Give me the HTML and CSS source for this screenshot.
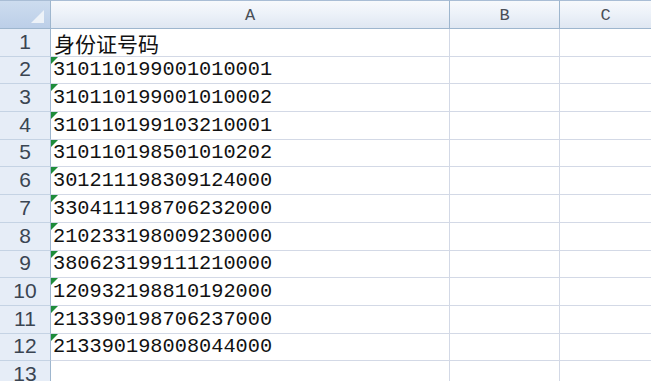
FILE: index.html
```html
<!DOCTYPE html>
<html>
<head>
<meta charset="utf-8">
<link rel="stylesheet" href="styles.css">
</head>
<body>
<div class="sheet">
  <div class="corner"><span class="corner-tri"></span></div>
  <div class="colhead">A</div>
  <div class="colhead">B</div>
  <div class="colhead last">C</div>

  <div class="rowhead">1</div><div class="cell a cjk">身份证号码</div><div class="cell"></div><div class="cell last"></div>
  <div class="rowhead">2</div><div class="cell a num">310110199001010001</div><div class="cell"></div><div class="cell last"></div>
  <div class="rowhead">3</div><div class="cell a num">310110199001010002</div><div class="cell"></div><div class="cell last"></div>
  <div class="rowhead">4</div><div class="cell a num">310110199103210001</div><div class="cell"></div><div class="cell last"></div>
  <div class="rowhead">5</div><div class="cell a num">310110198501010202</div><div class="cell"></div><div class="cell last"></div>
  <div class="rowhead">6</div><div class="cell a num">301211198309124000</div><div class="cell"></div><div class="cell last"></div>
  <div class="rowhead">7</div><div class="cell a num">330411198706232000</div><div class="cell"></div><div class="cell last"></div>
  <div class="rowhead">8</div><div class="cell a num">210233198009230000</div><div class="cell"></div><div class="cell last"></div>
  <div class="rowhead">9</div><div class="cell a num">380623199111210000</div><div class="cell"></div><div class="cell last"></div>
  <div class="rowhead">10</div><div class="cell a num">120932198810192000</div><div class="cell"></div><div class="cell last"></div>
  <div class="rowhead">11</div><div class="cell a num">213390198706237000</div><div class="cell"></div><div class="cell last"></div>
  <div class="rowhead">12</div><div class="cell a num">213390198008044000</div><div class="cell"></div><div class="cell last"></div>
  <div class="rowhead">13</div><div class="cell"></div><div class="cell"></div><div class="cell last"></div>
</div>
</body>
</html>
```

FILE: styles.css
```css
html, body {
  margin: 0;
  padding: 0;
  background: #ffffff;
  overflow: hidden;
}

.sheet {
  display: grid;
  grid-template-columns: 51px 399px 110px 91px;
  grid-template-rows: 29px repeat(13, 27.7px);
  width: 651px;
  height: 381px;
  overflow: hidden;
}

.corner {
  position: relative;
  background: linear-gradient(#cddcef, #bccfe8);
  border-right: 1px solid #9eb6ce;
  border-bottom: 1px solid #9eb6ce;
  border-top: 1px solid #a9bdd5;
  box-sizing: border-box;
}

.corner-tri {
  position: absolute;
  right: 6px;
  bottom: 5px;
  width: 0;
  height: 0;
  border-left: 13px solid transparent;
  border-bottom: 13px solid #edf2f8;
}

.colhead {
  box-sizing: border-box;
  background: linear-gradient(#f7f9fc 0%, #edf2f9 45%, #dfe7f2 100%);
  border-top: 1px solid #a9bdd5;
  border-right: 1px solid #9eb6ce;
  border-bottom: 1px solid #9eb6ce;
  display: flex;
  align-items: center;
  justify-content: center;
  font-family: "Liberation Mono", "DejaVu Sans Mono", monospace;
  font-size: 17px;
  color: #4a4f57;
  padding-top: 1px;
}

.colhead.last {
  border-right: none;
}

.rowhead {
  box-sizing: border-box;
  background: #e6edf7;
  border-right: 1px solid #9eb6ce;
  border-bottom: 1px solid #c5d3e4;
  display: flex;
  align-items: flex-end;
  justify-content: center;
  padding-bottom: 2px;
  font-family: "Liberation Sans", Arial, sans-serif;
  font-size: 21px;
  color: #3a4552;
  line-height: 24px;
}

.cell {
  position: relative;
  box-sizing: border-box;
  border-right: 1px solid #d3d9e6;
  border-bottom: 1px solid #d3d9e6;
  display: flex;
  align-items: flex-end;
  padding-left: 2px;
  padding-bottom: 1px;
  color: #111111;
  white-space: nowrap;
}

.cell.last {
  border-right: none;
}

.cjk {
  font-family: "Noto Sans CJK SC", "Noto Sans", sans-serif;
  font-size: 21px;
  line-height: 26px;
  padding-bottom: 0;
  padding-left: 3px;
}

.num {
  font-family: "Liberation Mono", "DejaVu Sans Mono", monospace;
  font-size: 20.3px;
  line-height: 24px;
  letter-spacing: 0;
}

.num::before {
  content: "";
  position: absolute;
  left: 0;
  top: 0;
  width: 0;
  height: 0;
  border-top: 7px solid #1e8c3a;
  border-right: 7px solid transparent;
}
```
